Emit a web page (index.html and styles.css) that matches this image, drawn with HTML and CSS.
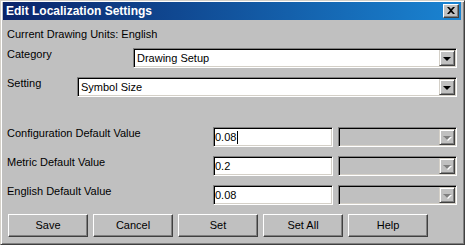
FILE: index.html
```html
<!DOCTYPE html>
<html>
<head>
<meta charset="utf-8">
<link rel="stylesheet" href="styles.css">
</head>
<body>
<div class="window">
  <div class="titlebar">
    <span class="title">Edit Localization Settings</span>
    <div class="close"><svg width="8" height="7" viewBox="0 0 8 7"><path d="M0 0h2l2 2 2-2h2L5 3.5 8 7H6L4 5 2 7H0l3-3.5z" fill="#000"/></svg></div>
  </div>
  <div class="content">
    <div class="units">Current Drawing Units: English</div>
    <div class="row row-category">
      <div class="label">Category</div>
      <div class="combo"><span class="combo-text">Drawing Setup</span><span class="drop"><i class="arrow"></i></span></div>
    </div>
    <div class="row row-setting">
      <div class="label">Setting</div>
      <div class="combo"><span class="combo-text">Symbol Size</span><span class="drop"><i class="arrow"></i></span></div>
    </div>
    <div class="row row-value row-first">
      <div class="label">Configuration Default Value</div>
      <div class="field"><span class="caret">0.08</span></div>
      <div class="combo disabled"><span class="combo-text"></span><span class="drop"><i class="arrow"></i></span></div>
    </div>
    <div class="row row-value">
      <div class="label">Metric Default Value</div>
      <div class="field">0.2</div>
      <div class="combo disabled"><span class="combo-text"></span><span class="drop"><i class="arrow"></i></span></div>
    </div>
    <div class="row row-value">
      <div class="label">English Default Value</div>
      <div class="field">0.08</div>
      <div class="combo disabled"><span class="combo-text"></span><span class="drop"><i class="arrow"></i></span></div>
    </div>
    <div class="buttons">
      <div class="btn">Save</div>
      <div class="btn">Cancel</div>
      <div class="btn">Set</div>
      <div class="btn">Set All</div>
      <div class="btn">Help</div>
    </div>
  </div>
</div>
</body>
</html>
```
FILE: styles.css
```css
* { box-sizing: border-box; }
html, body { margin: 0; padding: 0; background: #c0c0c0; }
body {
  font-family: "Liberation Sans", Arial, sans-serif;
  font-size: 11px;
  color: #000;
}
.window {
  width: 465px;
  height: 245px;
  background: #c0c0c0;
  border: 1px solid;
  border-color: #d4d0c8 #404040 #404040 #d4d0c8;
  box-shadow: inset 1px 1px #fff, inset -1px -1px #808080;
  padding: 1px 3px 3px 2px;
  display: flex;
  flex-direction: column;
}
.titlebar {
  height: 18px;
  background: linear-gradient(to right, #0a246a, #1a84d2);
  display: flex;
  align-items: center;
  justify-content: space-between;
  padding: 0 2px 0 3px;
}
.title {
  color: #fff;
  font-weight: bold;
  font-size: 12px;
  line-height: 14px;
}
.close {
  width: 16px;
  height: 14px;
  background: #c0c0c0;
  border: 1px solid;
  border-color: #fff #404040 #404040 #fff;
  box-shadow: inset -1px -1px #808080;
  display: flex;
  align-items: center;
  justify-content: center;
  padding-bottom: 1px;
}
.close svg { display: block; }
.content {
  flex: 1;
  padding: 0 4px 0 4px;
  display: flex;
  flex-direction: column;
}
.units {
  margin-top: 8px;
  line-height: 13px;
}
.row {
  display: grid;
  height: 20px;
  margin-top: 9px;
}
.row-category { margin-top: 7px; grid-template-columns: 126px 1fr; }
.row-setting { grid-template-columns: 70px 1fr; }
.row-value { grid-template-columns: 201px 120px 119px; column-gap: 5px; }
.row-first { margin-top: 30px; }
.label {
  line-height: 13px;
}
.combo, .field {
  height: 20px;
  border: 1px solid;
  border-color: #808080 #fff #fff #808080;
  box-shadow: inset 1px 1px #000, inset -1px -1px #d4d0c8;
  background: #fff;
  display: flex;
  align-items: center;
}
.combo-text {
  flex: 1;
  padding-left: 3px;
  line-height: 13px;
}
.field {
  padding-left: 1px;
  line-height: 13px;
}
.caret {
  border-right: 1px solid #000;
  padding-right: 1px;
  line-height: 13px;
}
.drop {
  width: 16px;
  height: 16px;
  margin-right: 1px;
  background: #c0c0c0;
  border: 1px solid;
  border-color: #d4d0c8 #404040 #404040 #d4d0c8;
  box-shadow: inset 1px 1px #fff, inset -1px -1px #808080;
  display: flex;
  align-items: center;
  justify-content: center;
}
.arrow {
  display: block;
  width: 0;
  height: 0;
  border-left: 4px solid transparent;
  border-right: 4px solid transparent;
  border-top: 4px solid #000;
  margin-top: 1px;
}
.combo.disabled { background: #c0c0c0; }
.combo.disabled .arrow {
  border-top-color: #808080;
  filter: drop-shadow(1px 1px 0 #fff);
}
.buttons {
  display: flex;
  gap: 5px;
  margin-top: 9px;
  padding-left: 1px;
}
.btn {
  width: 80px;
  height: 23px;
  border: 1px solid;
  border-color: #fff #404040 #404040 #fff;
  box-shadow: inset -1px -1px #808080;
  display: flex;
  align-items: center;
  justify-content: center;
  line-height: 13px;
}
```
